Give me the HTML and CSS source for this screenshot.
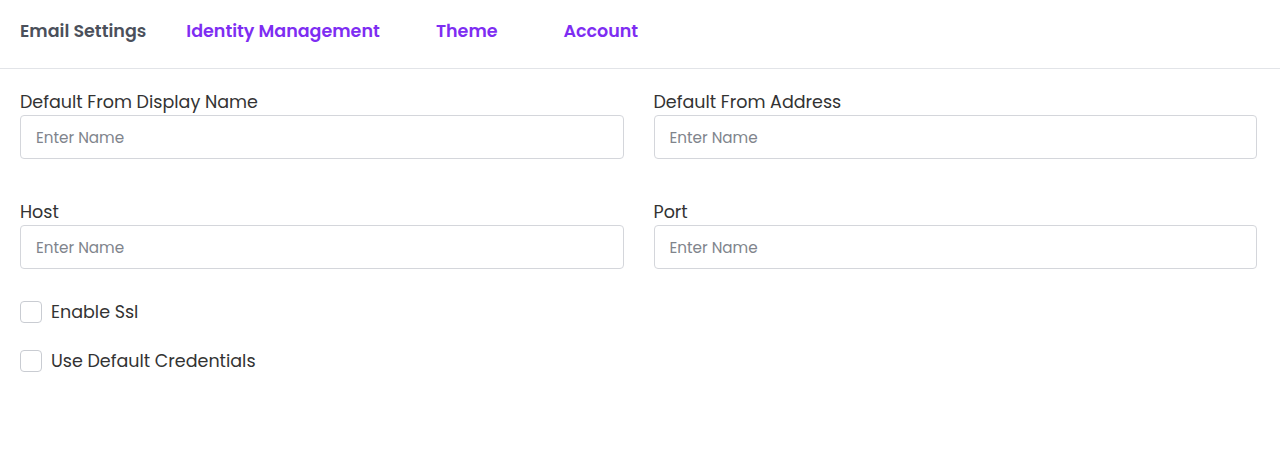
FILE: index.html
```html
<!DOCTYPE html>
<html lang="en">
<head>
<meta charset="utf-8">
<title>Email Settings</title>
<link rel="stylesheet" href="styles.css">
</head>
<body>
<nav class="tabs">
  <a class="tab tab-active">Email Settings</a>
  <a class="tab">Identity Management</a>
  <a class="tab">Theme</a>
  <a class="tab">Account</a>
</nav>
<form class="form">
  <div class="grid">
    <div class="field">
      <label class="label">Default From Display Name</label>
      <input class="input" type="text" placeholder="Enter Name">
    </div>
    <div class="field">
      <label class="label">Default From Address</label>
      <input class="input" type="text" placeholder="Enter Name">
    </div>
    <div class="field">
      <label class="label">Host</label>
      <input class="input" type="text" placeholder="Enter Name">
    </div>
    <div class="field">
      <label class="label">Port</label>
      <input class="input" type="text" placeholder="Enter Name">
    </div>
  </div>
  <div class="checks">
    <label class="check"><span class="box"></span><span>Enable Ssl</span></label>
    <label class="check"><span class="box"></span><span>Use Default Credentials</span></label>
  </div>
</form>
</body>
</html>
```
FILE: styles.css
```css
* { box-sizing: border-box; }
body {
  margin: 0;
  background: #fff;
  font-family: "Poppins", "Open Sans", sans-serif;
  color: #333;
}
.tabs {
  display: flex;
  height: 69px;
  border-bottom: 1px solid #e2e4e8;
  align-items: center;
}
.tab {
  min-width: 134px;
  padding: 0 20px;
  text-align: center;
  font-size: 17.5px;
  font-weight: 600;
  color: #7e2df2;
  line-height: 24px;
  margin-top: -6px;
}
.tab-active { color: #4b505b; }
.form { padding: 21px 23px 0 20px; }
.grid {
  display: grid;
  grid-template-columns: 1fr 1fr;
  column-gap: 30px;
  row-gap: 41px;
}
.field { display: flex; flex-direction: column; gap: 1px; }
.label {
  font-size: 17.5px;
  line-height: 24px;
  color: #333;
}
.input {
  height: 44px;
  border: 1px solid #d4d6db;
  border-radius: 4px;
  padding: 0 15px;
  font-family: inherit;
  font-size: 15.2px;
  color: #333;
  outline: none;
}
.input::placeholder { color: #80848c; }
.checks {
  display: flex;
  flex-direction: column;
  gap: 27px;
  margin-top: 32px;
}
.check {
  display: flex;
  align-items: center;
  gap: 9px;
  font-size: 17.5px;
  line-height: 22px;
  color: #333;
}
.box {
  width: 22px;
  height: 22px;
  border: 1px solid #c9ccd2;
  border-radius: 4px;
  background: #fff;
}
```
